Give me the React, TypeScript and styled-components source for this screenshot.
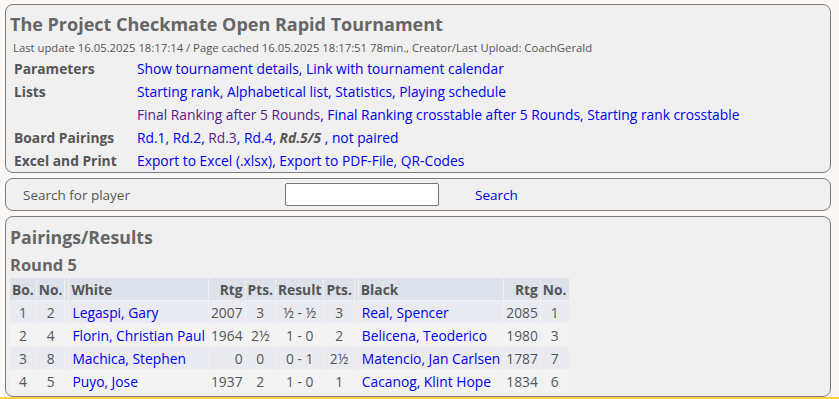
import React from "react";
import styled, { createGlobalStyle } from "styled-components";

const GlobalStyle = createGlobalStyle`
  html, body {
    margin: 0;
    padding: 0;
    background: #faf7f5;
    font-family: "Open Sans", "Noto Sans", sans-serif;
    color: #555;
  }
`;

const Page = styled.div`
  display: flex;
  flex-direction: column;
  gap: 5px;
  padding: 4px 8px 0 5px;
  height: 399px;
  box-sizing: border-box;
  overflow: hidden;
  border-bottom: 2px solid #ffcc44;
`;

const Panel = styled.section<{ $pad?: string }>`
  background: #f0f0f0;
  border: 1px solid #7a7a7a;
  border-radius: 8px;
  padding: ${({ $pad }) => $pad || "4px"};
`;

const Title = styled.h1<{ $size?: number; $line?: number }>`
  margin: 0;
  font-size: ${({ $size }) => $size || 18}px;
  font-weight: 700;
  color: #666;
  line-height: ${({ $line }) => $line || 30}px;
`;

const SubTitle = styled.h2`
  margin: 1px 0 0;
  font-size: 16.5px;
  font-weight: 700;
  color: #666;
  line-height: 26px;
`;

const Info = styled.div`
  font-size: 11.3px;
  color: #555;
  line-height: 18px;
  padding-left: 3px;
`;

const MenuGrid = styled.div`
  display: grid;
  grid-template-columns: 123px 1fr;
  grid-auto-rows: 23px;
  align-items: center;
  padding-left: 4px;
  font-size: 13.8px;
`;

const Label = styled.div`
  font-weight: 700;
  color: #555;
`;

const Links = styled.div`
  color: #0000ee;
  white-space: nowrap;
`;

const Link = styled.a<{ $visited?: boolean }>`
  color: ${({ $visited }) => ($visited ? "#551a8b" : "#0000f0")};
  text-decoration: none;
`;

const Current = styled.span`
  font-weight: 700;
  font-style: italic;
  color: #555;
`;

const SearchRow = styled.div`
  display: grid;
  grid-template-columns: 262px 190px auto;
  align-items: center;
  height: 31px;
  padding-left: 17px;
  font-size: 13.5px;
`;

const SearchInput = styled.input`
  width: 154px;
  height: 23px;
  box-sizing: border-box;
  border: 1px solid #767676;
  border-radius: 2px;
  background: #fff;
  padding: 0 4px;
`;

const Table = styled.table`
  border-collapse: separate;
  border-spacing: 1px;
  font-size: 13.8px;
  margin: -1px 0 0 -1px;
`;

const Th = styled.th<{ $align?: string }>`
  background: #dde1ea;
  font-weight: 700;
  color: #555;
  height: 22px;
  padding: 0 2px;
  text-align: ${({ $align }) => $align || "center"};
  white-space: nowrap;
`;

const Row = styled.tr<{ $odd: boolean }>`
  background: ${({ $odd }) => ($odd ? "#e9ebf0" : "#f3f3f3")};
`;

const Td = styled.td<{ $align?: string }>`
  height: 22px;
  padding: 0 2px;
  color: #555;
  text-align: ${({ $align }) => $align || "center"};
  white-space: nowrap;
`;

const NameTd = styled(Td)`
  padding: 0 3px;
`;

const Gap = styled.td`
  width: 1px;
  padding: 0 1px;
`;

const GapTh = styled(Th)`
  width: 1px;
  padding: 0 1px;
`;

const pairings = [
  { bo: 1, no: 2, white: "Legaspi, Gary", wr: "2007", wp: "3", res: "½ - ½", bp: "3", black: "Real, Spencer", br: "2085", bn: 1 },
  { bo: 2, no: 4, white: "Florin, Christian Paul", wr: "1964", wp: "2½", res: "1 - 0", bp: "2", black: "Belicena, Teoderico", br: "1980", bn: 3 },
  { bo: 3, no: 8, white: "Machica, Stephen", wr: "0", wp: "0", res: "0 - 1", bp: "2½", black: "Matencio, Jan Carlsen", br: "1787", bn: 7 },
  { bo: 4, no: 5, white: "Puyo, Jose", wr: "1937", wp: "2", res: "1 - 0", bp: "1", black: "Cacanog, Klint Hope", br: "1834", bn: 6 },
];

export default function App() {
  return (
    <>
      <GlobalStyle />
      <Page>
        <Panel $pad="4px 4px 0 4px">
          <Title>The Project Checkmate Open Rapid Tournament</Title>
          <Info>
            Last update 16.05.2025 18:17:14 / Page cached 16.05.2025 18:17:51 78min., Creator/Last Upload: CoachGerald
          </Info>
          <MenuGrid>
            <Label>Parameters</Label>
            <Links>
              <Link href="#">Show tournament details</Link>, <Link href="#">Link with tournament calendar</Link>
            </Links>
            <Label>Lists</Label>
            <Links>
              <Link href="#">Starting rank</Link>, <Link href="#">Alphabetical list</Link>,{" "}
              <Link href="#">Statistics</Link>, <Link href="#">Playing schedule</Link>
            </Links>
            <Label />
            <Links>
              <Link href="#" $visited>Final Ranking after 5 Rounds</Link>,{" "}
              <Link href="#">Final Ranking crosstable after 5 Rounds</Link>,{" "}
              <Link href="#">Starting rank crosstable</Link>
            </Links>
            <Label>Board Pairings</Label>
            <Links>
              <Link href="#">Rd.1</Link>, <Link href="#">Rd.2</Link>, <Link href="#" $visited>Rd.3</Link>,{" "}
              <Link href="#">Rd.4</Link>, <Current>Rd.5/5</Current> , <Link href="#">not paired</Link>
            </Links>
            <Label>Excel and Print</Label>
            <Links>
              <Link href="#">Export to Excel (.xlsx)</Link>, <Link href="#">Export to PDF-File</Link>,{" "}
              <Link href="#">QR-Codes</Link>
            </Links>
          </MenuGrid>
        </Panel>

        <Panel $pad="0">
          <SearchRow>
            <span>Search for player</span>
            <SearchInput type="text" />
            <Link href="#">Search</Link>
          </SearchRow>
        </Panel>

        <Panel $pad="6px 4px 3px 4px">
          <Title $size={17.7} $line={28}>Pairings/Results</Title>
          <SubTitle>Round 5</SubTitle>
          <Table>
            <thead>
              <tr>
                <Th>Bo.</Th>
                <Th>No.</Th>
                <GapTh />
                <Th $align="left">White</Th>
                <Th $align="right">Rtg</Th>
                <Th>Pts.</Th>
                <Th>Result</Th>
                <Th>Pts.</Th>
                <GapTh />
                <Th $align="left">Black</Th>
                <Th $align="right">Rtg</Th>
                <Th>No.</Th>
              </tr>
            </thead>
            <tbody>
              {pairings.map((p, i) => (
                <Row key={p.bo} $odd={i % 2 === 0}>
                  <Td>{p.bo}</Td>
                  <Td>{p.no}</Td>
                  <Gap />
                  <NameTd $align="left">
                    <Link href="#">{p.white}</Link>
                  </NameTd>
                  <Td $align="right">{p.wr}</Td>
                  <Td>{p.wp}</Td>
                  <Td>{p.res}</Td>
                  <Td>{p.bp}</Td>
                  <Gap />
                  <NameTd $align="left">
                    <Link href="#">{p.black}</Link>
                  </NameTd>
                  <Td $align="right">{p.br}</Td>
                  <Td>{p.bn}</Td>
                </Row>
              ))}
            </tbody>
          </Table>
        </Panel>
      </Page>
    </>
  );
}
